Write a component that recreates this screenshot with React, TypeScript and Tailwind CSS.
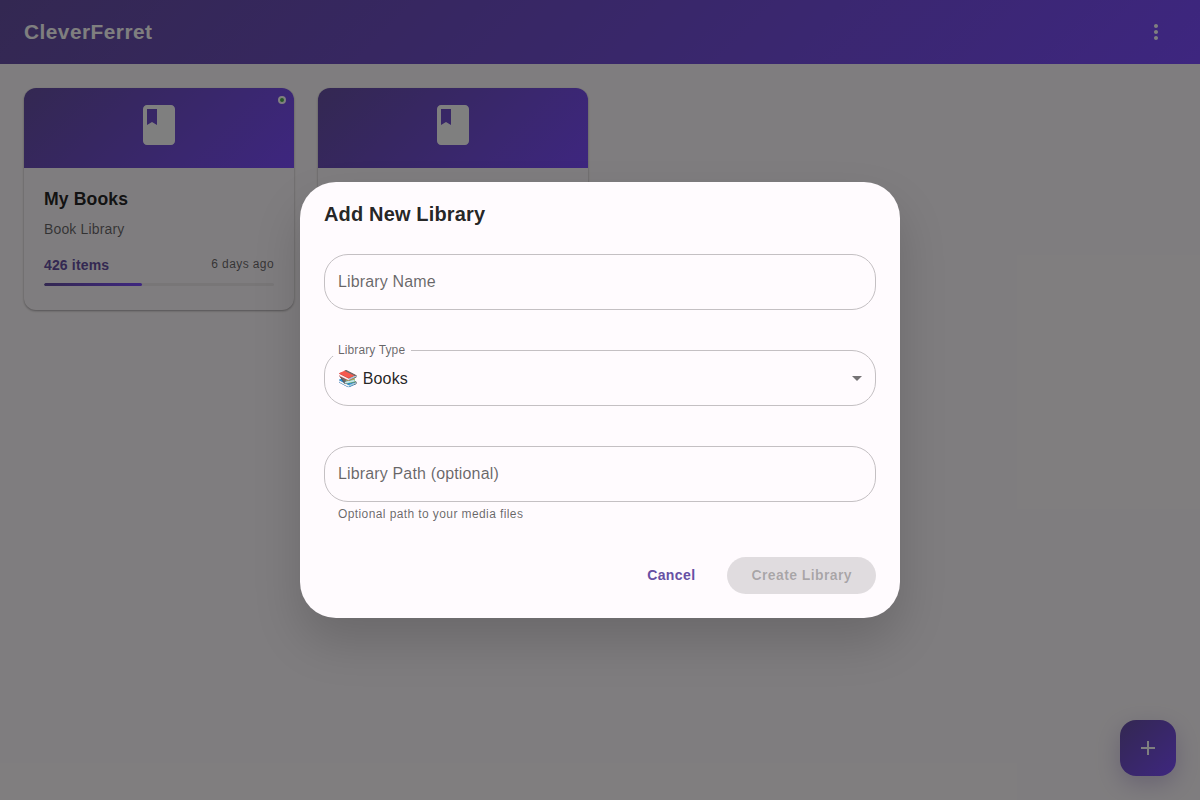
import type { ReactNode } from "react";

function Icon({ d, className }: { d: string; className: string }) {
  return (
    <svg viewBox="0 0 24 24" fill="currentColor" className={className} aria-hidden="true">
      <path d={d} />
    </svg>
  );
}

const BOOK =
  "M18 2H6c-1.1 0-2 .9-2 2v16c0 1.1.9 2 2 2h12c1.1 0 2-.9 2-2V4c0-1.1-.9-2-2-2M6 4h5v8l-2.5-1.5L6 12z";
const MORE =
  "M12 8c1.1 0 2-.9 2-2s-.9-2-2-2-2 .9-2 2 .9 2 2 2m0 2c-1.1 0-2 .9-2 2s.9 2 2 2 2-.9 2-2-.9-2-2-2m0 6c-1.1 0-2 .9-2 2s.9 2 2 2 2-.9 2-2-.9-2-2-2";
const ADD = "M19 13h-6v6h-2v-6H5v-2h6V5h2v6h6z";
const ARROW = "m7 10 5 5 5-5z";

function LibraryCard({ online, children }: { online?: boolean; children?: ReactNode }) {
  return (
    <article className="relative h-[222px] w-[270px] overflow-hidden rounded-xl bg-[#fffbfe] shadow-[0_1px_3px_rgba(0,0,0,0.12),0_1px_2px_rgba(0,0,0,0.24)]">
      <div className="flex h-20 items-center justify-center bg-[linear-gradient(135deg,#6750a4_0%,#7c4dff_100%)] pb-1.5 text-white">
        <Icon d={BOOK} className="size-12" />
      </div>
      {online && (
        <span className="absolute top-2 right-2 size-2 rounded-full border-2 border-white bg-[#4caf50]" />
      )}
      <div className="px-5 pt-5">{children}</div>
    </article>
  );
}

function Field({ label, select, children }: { label: string; select?: boolean; children?: ReactNode }) {
  return (
    <div className="relative flex h-14 items-center px-3.5">
      <fieldset className="pointer-events-none absolute inset-x-0 -top-[5px] bottom-0 m-0 rounded-3xl border border-[#c4c0c3] px-2">
        <legend className={select ? "h-[11px] w-[78px]" : "h-[11px] w-0"} />
      </fieldset>
      {select ? (
        <>
          <span className="absolute top-0 left-3.5 origin-top-left -translate-y-[9px] scale-75 text-base leading-[23px] tracking-[0.15px] whitespace-nowrap text-black/60">
            {label}
          </span>
          <span className="flex-1 text-base leading-[23px] tracking-[0.15px] text-black/87">{children}</span>
          <Icon d={ARROW} className="-mr-[7px] size-6 text-black/54" />
        </>
      ) : (
        <span className="pb-0.5 text-base leading-[23px] tracking-[0.15px] text-black/60">{label}</span>
      )}
    </div>
  );
}

export default function App() {
  return (
    <div className="relative h-[800px] w-full overflow-hidden bg-[#fffbfe] font-['Liberation_Sans',Arial,sans-serif] text-black/87">
      <header className="flex h-16 items-center justify-between bg-[linear-gradient(135deg,#6750a4_0%,#7c4dff_100%)] px-6 text-white">
        <h1 className="text-[20.8px] leading-8 font-bold tracking-[0.5px]">CleverFerret</h1>
        <button className="flex size-10 items-center justify-center">
          <Icon d={MORE} className="size-6" />
        </button>
      </header>

      <main className="flex gap-6 p-6">
        <LibraryCard online>
          <h2 className="mb-2 text-[17.6px] leading-[23px] font-bold tracking-[0.0075em]">My Books</h2>
          <p className="mb-4 text-sm leading-5 tracking-[0.15px] text-black/60">Book Library</p>
          <div className="mb-2 flex h-5 items-center justify-between">
            <span className="text-sm leading-5 font-bold tracking-[0.15px] text-[#6750a4]">426 items</span>
            <span className="pb-0.5 text-xs leading-5 tracking-[0.4px] text-black/60">6 days ago</span>
          </div>
          <div className="h-[3px] overflow-hidden rounded-xs bg-black/6">
            <div className="h-full w-[98px] rounded-xs bg-[linear-gradient(90deg,#6750a4,#7c4dff)]" />
          </div>
        </LibraryCard>
        <LibraryCard />
      </main>

      <button className="absolute right-6 bottom-6 flex size-14 items-center justify-center rounded-2xl bg-[linear-gradient(135deg,#6750a4_0%,#7c4dff_100%)] text-white shadow-[0_8px_24px_rgba(103,80,164,0.3)]">
        <Icon d={ADD} className="size-6" />
      </button>

      <div className="absolute inset-0 flex items-center justify-center bg-black/50">
        <section
          role="dialog"
          className="flex h-[436px] w-[600px] flex-col rounded-[36px] bg-[#fffbfe] shadow-[0_24px_48px_rgba(0,0,0,0.16)]"
        >
          <h2 className="px-6 py-4 text-xl leading-8 font-bold tracking-[0.0075em]">Add New Library</h2>
          <div className="flex flex-1 flex-col gap-10 px-6 pt-2">
            <Field label="Library Name" />
            <Field label="Library Type" select>
              📚 Books
            </Field>
            <div>
              <Field label="Library Path (optional)" />
              <p className="mx-3.5 mt-0.5 text-xs leading-5 tracking-[0.4px] text-black/60">
                Optional path to your media files
              </p>
            </div>
          </div>
          <div className="flex justify-end gap-2 p-6">
            <button className="rounded-full px-6 pt-1.5 pb-[7px] text-sm leading-6 font-bold tracking-[0.4px] text-[#6750a4]">
              Cancel
            </button>
            <button
              disabled
              className="rounded-full bg-black/12 px-6 pt-1.5 pb-[7px] text-sm leading-6 font-bold tracking-[0.4px] text-black/26"
            >
              Create Library
            </button>
          </div>
        </section>
      </div>
    </div>
  );
}
